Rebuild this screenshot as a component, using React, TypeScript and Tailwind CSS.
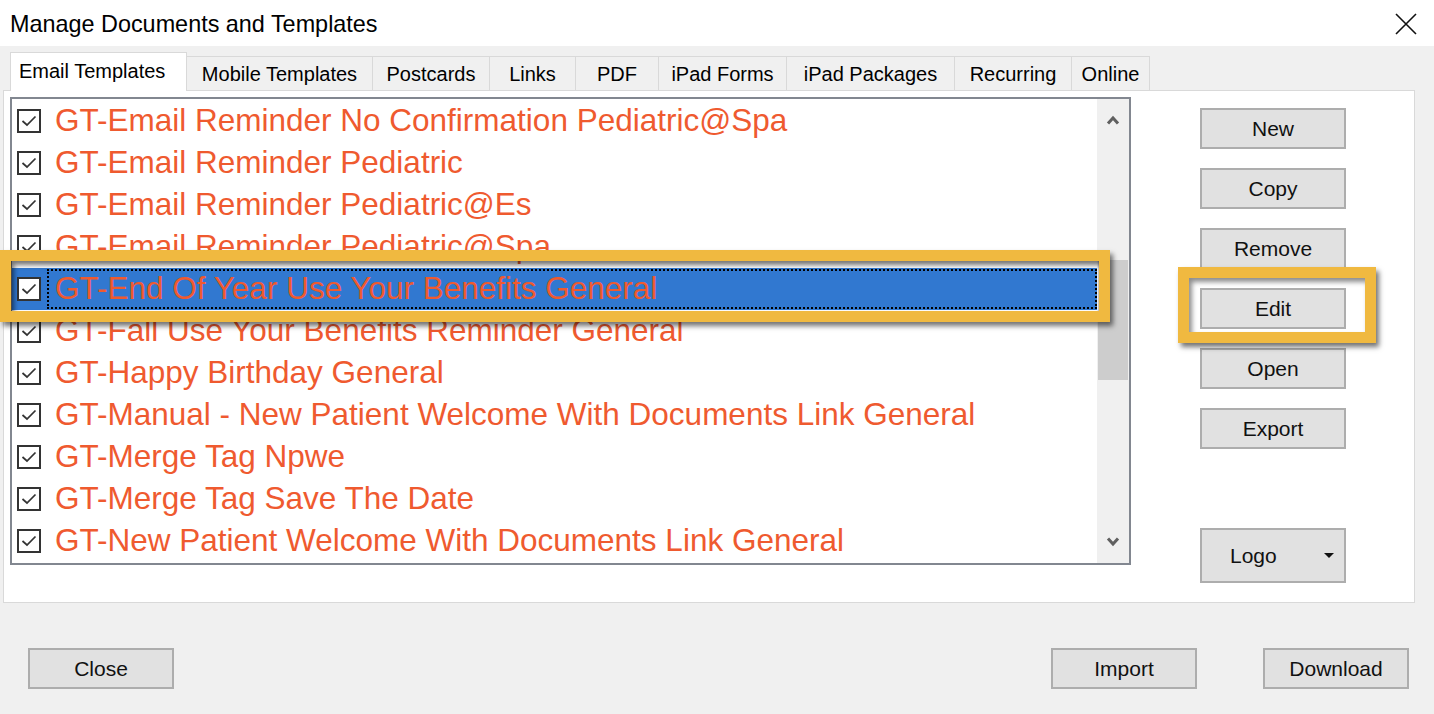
import React from "react";

const rows = [
  "GT-Email Reminder No Confirmation Pediatric@Spa",
  "GT-Email Reminder Pediatric",
  "GT-Email Reminder Pediatric@Es",
  "GT-Email Reminder Pediatric@Spa",
  "GT-End Of Year Use Your Benefits General",
  "GT-Fall Use Your Benefits Reminder General",
  "GT-Happy Birthday General",
  "GT-Manual - New Patient Welcome With Documents Link General",
  "GT-Merge Tag Npwe",
  "GT-Merge Tag Save The Date",
  "GT-New Patient Welcome With Documents Link General",
];

const tabs: [string, number][] = [
  ["Email Templates", 177],
  ["Mobile Templates", 186],
  ["Postcards", 117],
  ["Links", 86],
  ["PDF", 83],
  ["iPad Forms", 128],
  ["iPad Packages", 168],
  ["Recurring", 117],
  ["Online", 78],
];

function Check() {
  return (
    <div className="w-[24px] h-[24px] shrink-0 border-2 border-[#333333] bg-white flex items-center justify-center">
      <svg width="20" height="20" viewBox="0 0 20 20">
        <path d="M3.5 10 L8 14 L16.5 5.5" fill="none" stroke="#333333" strokeWidth="1.7" />
      </svg>
    </div>
  );
}

function Btn({ label, className = "" }: { label: string; className?: string }) {
  return (
    <div
      className={
        "w-[146px] h-[41px] shrink-0 bg-[#e1e1e1] border-2 border-[#adadad] flex items-center justify-center text-[21px] text-[#111111] " +
        className
      }
    >
      {label}
    </div>
  );
}

export default function App() {
  return (
    <div
      className="relative w-[1434px] h-[714px] bg-[#f0f0f0] overflow-hidden flex flex-col"
      style={{ fontFamily: '"Liberation Sans", Arial, sans-serif' }}
    >
      {/* Title bar */}
      <div className="h-[46px] bg-white flex items-center justify-between pl-[10px] pr-[17px] pt-[4px] shrink-0">
        <span className="text-[23.4px] text-black leading-none">Manage Documents and Templates</span>
        <svg width="22" height="22" viewBox="0 0 22 22" className="-mt-[2px]">
          <path d="M1 1 L21 21 M21 1 L1 21" stroke="#111" strokeWidth="1.6" />
        </svg>
      </div>

      {/* Tabs */}
      <div className="h-[44px] flex items-end pl-[10px] shrink-0 relative z-10">
        {tabs.map(([t, w], i) =>
          i === 0 ? (
            <div
              key={t}
              className="h-[39px] -mb-px bg-white border border-b-0 border-[#d9d9d9] flex items-center pl-[8px] text-[20px] text-black pb-[3px]"
              style={{ width: w }}
            >
              {t}
            </div>
          ) : (
            <div
              key={t}
              className="h-[34px] bg-[#f0f0f0] border border-l-0 border-b-0 border-[#d9d9d9] flex items-center justify-center text-[20px] text-black"
              style={{ width: w }}
            >
              {t}
            </div>
          )
        )}
      </div>

      {/* Panel */}
      <div className="ml-[3px] w-[1412px] h-[513px] shrink-0 bg-white border border-[#d9d9d9] flex pl-[6px] pt-[6px]">
        {/* Listbox */}
        <div className="w-[1121px] h-[468px] border-2 border-[#828790] flex">
          <div className="flex-1 flex flex-col pt-[1px]">
            {rows.map((r, i) =>
              i === 4 ? (
                <div key={r} className="h-[42px] bg-[#3178d0] flex items-center pl-[5px] shrink-0">
                  <Check />
                  <div className="flex-1 h-[40px] ml-[6px] border-2 border-dotted border-black flex items-center pl-[6px]">
                    <span className="text-[31.5px] text-[#ef5a2f] leading-none whitespace-nowrap">{r}</span>
                  </div>
                </div>
              ) : (
                <div key={r} className="h-[42px] flex items-center pl-[5px] shrink-0">
                  <Check />
                  <span className="ml-[14px] text-[31.5px] text-[#ef5a2f] leading-none whitespace-nowrap">{r}</span>
                </div>
              )
            )}
          </div>
          {/* Scrollbar */}
          <div className="w-[32px] bg-[#f0f0f0] flex flex-col items-stretch pt-[1px] pb-[1px]">
            <div className="h-[40px] flex items-center justify-center">
              <svg width="14" height="10" viewBox="0 0 14 10">
                <path d="M2 8.5 L7 3 L12 8.5" fill="none" stroke="#606060" strokeWidth="3" />
              </svg>
            </div>
            <div className="h-[120px] mt-[120px] mx-[1px] bg-[#cdcdcd]" />
            <div className="flex-1" />
            <div className="h-[40px] flex items-center justify-center">
              <svg width="14" height="10" viewBox="0 0 14 10">
                <path d="M2 1.5 L7 7 L12 1.5" fill="none" stroke="#606060" strokeWidth="3" />
              </svg>
            </div>
          </div>
        </div>

        {/* Buttons column */}
        <div className="ml-[69px] pt-[11px] flex flex-col gap-[19px]">
          <Btn label="New" />
          <Btn label="Copy" />
          <Btn label="Remove" />
          <Btn label="Edit" />
          <Btn label="Open" />
          <Btn label="Export" />
          <div className="w-[146px] h-[55px] mt-[60px] bg-[#e1e1e1] border-2 border-[#adadad] flex items-center text-[21px] text-[#111111] pl-[28px] pr-[10px]">
            <span className="flex-1">Logo</span>
            <svg width="10" height="6" viewBox="0 0 10 6">
              <path d="M0 0 L10 0 L5 5 Z" fill="#111" />
            </svg>
          </div>
        </div>
      </div>

      {/* Bottom buttons */}
      <div className="flex items-start mt-[45px] pl-[28px] pr-[25px]">
        <Btn label="Close" />
        <div className="flex-1" />
        <Btn label="Import" />
        <Btn label="Download" className="ml-[66px]" />
      </div>

      {/* Highlight overlays */}
      <div className="absolute left-0 top-[250px] w-[1110px] h-[72px] border-[11px] border-[#f0b940] shadow-[3px_4px_5px_rgba(0,0,0,0.55),inset_3px_4px_5px_rgba(0,0,0,0.55)] pointer-events-none" />
      <div className="absolute left-[1178px] top-[267px] w-[198px] h-[76px] border-[11px] border-[#f0b940] shadow-[3px_4px_5px_rgba(0,0,0,0.55),inset_3px_4px_5px_rgba(0,0,0,0.45)] pointer-events-none" />
    </div>
  );
}
